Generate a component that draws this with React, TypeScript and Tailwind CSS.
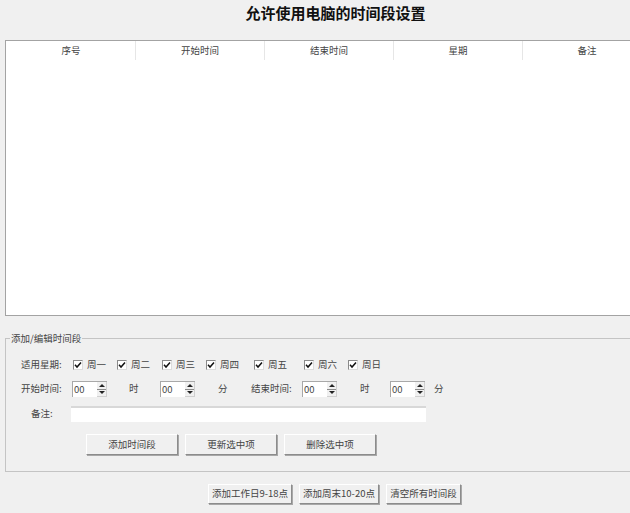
const FONT = "font-['Noto_Sans_CJK_SC','Liberation_Sans',sans-serif]";

const COLUMNS = ['序号', '开始时间', '结束时间', '星期', '备注'];
const DAYS = [
  { label: '周一', width: 'w-[44px]' },
  { label: '周二', width: 'w-[45px]' },
  { label: '周三', width: 'w-[44px]' },
  { label: '周四', width: 'w-[48px]' },
  { label: '周五', width: 'w-[50px]' },
  { label: '周六', width: 'w-[44px]' },
  { label: '周日', width: 'w-[44px]' },
];

function DayCheck({ label, width }: { label: string; width: string }) {
  return (
    <div className={`flex items-center ${width}`}>
      <div className="w-[10px] h-[10px] bg-white border border-t-[#8a8a8a] border-l-[#8a8a8a] border-r-[#dcdcdc] border-b-[#dcdcdc] flex items-center justify-center">
        <svg width="8" height="8" viewBox="0 0 8 8">
          <path d="M1 3.8 L3 6 L7 1.4" fill="none" stroke="#111" strokeWidth="1.5" />
        </svg>
      </div>
      <span className="ml-[4px] text-[9.5px] leading-none text-[#444]">{label}</span>
    </div>
  );
}

function Spin() {
  return (
    <div className="w-[35px] h-[16px] bg-white border-l border-t border-[#a8a8a8] flex justify-between">
      <span className="pl-[1px] text-[9.5px] leading-[15px] text-[#444]">00</span>
      <div className="w-[10px] flex flex-col bg-[#f0f0f0] border-b border-r border-[#d0d0d0]">
        <div className="flex-1 flex items-center justify-center border-b border-[#8a8a8a]">
          <div className="w-0 h-0 border-x-[3px] border-x-transparent border-b-[3px] border-b-[#222]" />
        </div>
        <div className="flex-1 flex items-center justify-center">
          <div className="w-0 h-0 border-x-[3px] border-x-transparent border-t-[3px] border-t-[#222]" />
        </div>
      </div>
    </div>
  );
}

function Btn({ text, width, height }: { text: string; width: string; height: string }) {
  return (
    <button className={`${width} ${height} bg-[#f0f0f0] border border-t-white border-l-white border-r-[#8c8c8c] border-b-[#8c8c8c] shadow-[1px_1px_0_#a8a8a8] text-[9.5px] leading-none text-[#444]`}>
      {text}
    </button>
  );
}

export default function App() {
  return (
    <div className={`w-[630px] h-[513px] overflow-hidden bg-[#f0f0f0] ${FONT}`}>
      <h1 className="h-[40px] pt-[3px] pl-[41px] text-center text-[15px] leading-[20px] font-bold text-[#111]">
        允许使用电脑的时间段设置
      </h1>

      <div className="ml-[5px] w-[700px] h-[276px] bg-white border border-[#a3a3a3]">
        <div className="flex h-[19px] pl-[1px]">
          {COLUMNS.map((c) => (
            <div key={c} className="w-[129px] border-r border-[#e6e6e6] text-center text-[9.5px] leading-[18px] text-[#444]">
              {c}
            </div>
          ))}
        </div>
      </div>

      <fieldset className="mt-[16px] ml-[5px] w-[700px] h-[140px] border border-[#c4c4c4]">
        <legend className="ml-[4px] px-[1px] text-[9.5px] leading-[12px] text-[#444]">添加/编辑时间段</legend>

        <div className="mt-[14px] flex items-center h-[14px]">
          <span className="ml-[15px] w-[52px] text-[9.5px] leading-none text-[#444]">适用星期:</span>
          {DAYS.map((d) => (
            <DayCheck key={d.label} label={d.label} width={d.width} />
          ))}
        </div>

        <div className="mt-[9px] flex items-center h-[16px] text-[9.5px] leading-none text-[#444]">
          <span className="ml-[15px] w-[51px]">开始时间:</span>
          <Spin />
          <span className="ml-[22px] w-[31px]">时</span>
          <Spin />
          <span className="ml-[23px] w-[33px]">分</span>
          <span className="w-[51px]">结束时间:</span>
          <Spin />
          <span className="ml-[23px] w-[30px]">时</span>
          <Spin />
          <span className="ml-[9px]">分</span>
        </div>

        <div className="mt-[9px] flex items-center h-[16px]">
          <span className="ml-[25px] w-[40px] text-[9.5px] leading-none text-[#444]">备注:</span>
          <div className="w-[355px] h-[16px] bg-white border-t-2 border-[#d8d8d8]" />
        </div>

        <div className="mt-[12px] ml-[80px] flex gap-[7px]">
          <Btn text="添加时间段" width="w-[92px]" height="h-[21px]" />
          <Btn text="更新选中项" width="w-[92px]" height="h-[21px]" />
          <Btn text="删除选中项" width="w-[92px]" height="h-[21px]" />
        </div>
      </fieldset>

      <div className="mt-[12px] ml-[208px] flex gap-[7px]">
        <Btn text="添加工作日9-18点" width="w-[84px]" height="h-[20px]" />
        <Btn text="添加周末10-20点" width="w-[80px]" height="h-[20px]" />
        <Btn text="清空所有时间段" width="w-[75px]" height="h-[20px]" />
      </div>
    </div>
  );
}
